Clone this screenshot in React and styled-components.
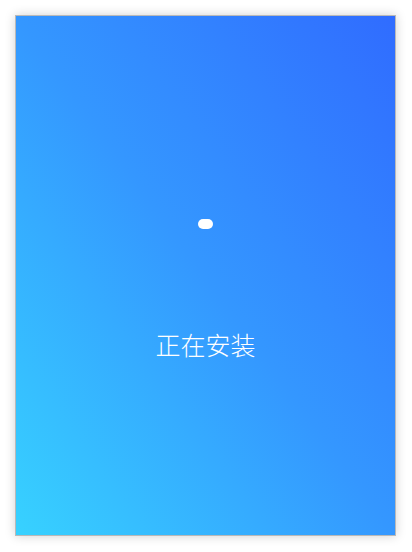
import React from 'react';
import styled, { createGlobalStyle } from 'styled-components';

const GlobalStyle = createGlobalStyle`
  html, body {
    margin: 0;
    padding: 0;
    background: #ffffff;
  }
  body {
    font-family: "Noto Sans CJK SC", "Noto Sans", sans-serif;
  }
`;

function App() {
  return (
    <Page>
      <GlobalStyle />
      <Panel>
        <Spinner />
        <Label>正在安装</Label>
      </Panel>
    </Page>
  );
}

export default App;

const Page = styled.div`
  width: 412px;
  height: 552px;
  padding: 15px 16px 16px 15px;
  box-sizing: border-box;
`;

const Panel = styled.div`
  width: 100%;
  height: 100%;
  box-sizing: border-box;
  border: 1px solid #b9b9b9;
  box-shadow: 0 0 10px rgba(0, 0, 0, 0.18);
  background: linear-gradient(to top right, #37d2ff 0%, #3497ff 50%, #306cff 100%);
  display: flex;
  flex-direction: column;
  align-items: center;
  padding-top: 203px;
`;

const Spinner = styled.div`
  width: 15px;
  height: 10px;
  border-radius: 5px;
  background: #ffffff;
`;

const Label = styled.div`
  margin-top: 98px;
  color: #ffffff;
  font-family: "Noto Sans CJK SC", sans-serif;
  font-size: 25px;
  font-weight: 300;
  line-height: 34px;
  letter-spacing: 0;
`;
